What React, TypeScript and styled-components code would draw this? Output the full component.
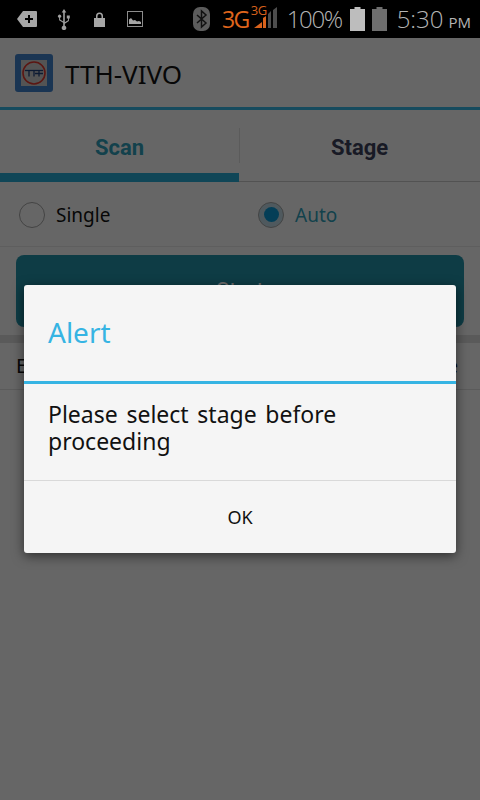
import React from 'react'
import styled, { createGlobalStyle } from 'styled-components'

const GlobalStyle = createGlobalStyle`
  html, body {
    margin: 0;
    padding: 0;
    height: 100%;
    background: #f4f4f4;
    font-family: "Noto Sans", Roboto, sans-serif;
  }
`

const Screen = styled.div`
  position: relative;
  width: 480px;
  height: 800px;
  overflow: hidden;
  display: flex;
  flex-direction: column;
  background: #f4f4f4;
`

const StatusBar = styled.div`
  position: relative;
  z-index: 3;
  height: 38px;
  flex: none;
  background: #000;
  display: flex;
  align-items: center;
  padding-left: 17px;
  color: #b4b4b4;
`

const StatusLeft = styled.div`
  display: flex;
  align-items: center;
`

const StatusRight = styled.div`
  margin-left: auto;
  padding-right: 9px;
  display: flex;
  align-items: center;
`

const NetLabel = styled.span`
  color: #e0661c;
  font: 400 23px/1 "Open Sans", sans-serif;
  letter-spacing: -1.5px;
  margin-left: 12px;
`

const SignalWrap = styled.div`
  position: relative;
  width: 28px;
  height: 26px;
  margin-left: 1px;
`

const SmallNet = styled.span`
  position: absolute;
  left: 1px;
  top: -2px;
  color: #d9621c;
  font: 400 13px/1 "Open Sans", sans-serif;
  letter-spacing: -0.4px;
`

const Percent = styled.span`
  font: 300 24px/1 "Open Sans", sans-serif;
  letter-spacing: -1.4px;
  margin-left: 9px;
`

const Clock = styled.span`
  font: 300 24px/1 "Open Sans", sans-serif;
  margin-left: 10px;
`

const Meridiem = styled.span`
  font: 400 15px/1 "Open Sans", sans-serif;
  margin-left: 5px;
  margin-top: 6px;
`

const Header = styled.header`
  height: 69px;
  flex: none;
  display: flex;
  align-items: center;
  padding-left: 15px;
  gap: 12px;
  border-bottom: 3px solid #36b4e0;
`

const AppIcon = styled.div`
  width: 38px;
  height: 38px;
  border-radius: 3px;
  background: #3f7fc6;
  display: flex;
  align-items: center;
  justify-content: center;
`

const AppTitle = styled.h1`
  margin: 2px 0 0;
  font: 400 26px/1 "Noto Sans", sans-serif;
  color: #111;
`

const Tabs = styled.nav`
  height: 72px;
  flex: none;
  display: flex;
  border-bottom: 1px solid #c4c4c4;
  box-sizing: border-box;
`

const Tab = styled.div<{ $active?: boolean }>`
  position: relative;
  display: flex;
  align-items: center;
  justify-content: center;
  width: ${p => (p.$active ? '239px' : '241px')};
  padding-top: 5px;
  box-sizing: border-box;
  font: 700 22px/1 Roboto, sans-serif;
  color: ${p => (p.$active ? '#2e9cb5' : '#3a3f58')};

  ${p =>
    p.$active
      ? `&::after {
          content: '';
          position: absolute;
          left: 0;
          right: 0;
          bottom: -1px;
          height: 9px;
          background: #28a7cf;
        }`
      : `&::before {
          content: '';
          position: absolute;
          left: 0;
          top: 18px;
          height: 35px;
          width: 1px;
          background: #d8d8d8;
        }`}
`

const RadioRow = styled.div`
  height: 65px;
  flex: none;
  display: grid;
  grid-template-columns: 239px 1fr;
  align-items: center;
  box-sizing: border-box;
  border-bottom: 1px solid #e0e0e0;
  padding: 1px 0 0 19px;
`

const RadioItem = styled.label<{ $on?: boolean }>`
  display: flex;
  align-items: center;
  gap: 11px;
  font: 400 19px/1 "Noto Sans", sans-serif;
  color: ${p => (p.$on ? '#2e9cb5' : '#111')};
`

const RadioText = styled.span`
  margin-top: 2px;
`

const RadioMark = styled.span<{ $on?: boolean }>`
  width: 26px;
  height: 26px;
  box-sizing: border-box;
  border-radius: 50%;
  border: 1.5px solid #a0a0a0;
  background: ${p => (p.$on ? '#bcd5df' : 'transparent')};
  display: flex;
  align-items: center;
  justify-content: center;

  &::after {
    content: '';
    width: 15px;
    height: 15px;
    border-radius: 50%;
    background: ${p => (p.$on ? '#0a95cf' : 'transparent')};
  }
`

const StartButton = styled.button`
  display: block;
  height: 72px;
  flex: none;
  margin: 8px 16px;
  border: 0;
  border-radius: 8px;
  background: #238fa5;
  color: #fff;
  font: 400 22px/1 Roboto, sans-serif;
`

const Band = styled.div`
  height: 8px;
  flex: none;
  background: #d6d6d6;
`

const ListHead = styled.div`
  height: 46px;
  flex: none;
  display: flex;
  align-items: center;
  justify-content: space-between;
  padding: 0 22px 0 16px;
  border-bottom: 1px solid #d8d8d8;
  font: 400 20px/1 "Noto Sans", sans-serif;
  color: #111;
`

const Backdrop = styled.div`
  position: absolute;
  inset: 0;
  z-index: 1;
  background: rgba(0, 0, 0, 0.58);
  display: flex;
  justify-content: center;
  padding-top: 285px;
  box-sizing: border-box;
`

const Dialog = styled.div`
  width: 432px;
  height: 268px;
  border-radius: 3px;
  background: #f5f5f5;
  box-shadow: 0 3px 12px rgba(0, 0, 0, 0.55);
  display: flex;
  flex-direction: column;
`

const DialogTitle = styled.div`
  height: 99px;
  flex: none;
  box-sizing: border-box;
  padding: 31px 0 0 24px;
  border-bottom: 3px solid #36b4e3;
  color: #36b4e3;
  font: 400 28px/1.2 "Noto Sans", sans-serif;
`

const DialogBody = styled.div`
  height: 97px;
  flex: none;
  box-sizing: border-box;
  padding: 17px 24px 0;
  border-bottom: 1px solid #d9d9d9;
  color: #111;
  font: 400 23px/27px "Noto Sans", sans-serif;
  word-spacing: 2.7px;
`

const DialogAction = styled.button`
  flex: 1;
  border: 0;
  background: none;
  color: #111;
  font: 400 18px/1 "Noto Sans", sans-serif;
`

const BatteryIcon = ({ fill, gap }: { fill: string; gap?: number }) => (
  <svg width="15" height="24" viewBox="0 0 15 24" style={{ marginLeft: gap }}>
    <path d="M4.5 0h6v2H15v22H0V2h4.5z" fill={fill} />
  </svg>
)

export default function App() {
  return (
    <Screen>
      <GlobalStyle />
      <StatusBar>
        <StatusLeft>
          <svg width="20" height="16" viewBox="0 0 20 16">
            <path d="M6 0h13a1 1 0 0 1 1 1v14a1 1 0 0 1-1 1H6L0 8z" fill="#a6a6a6" />
            <path d="M8 7h3V4h2v3h3v2h-3v3h-2V9H8z" fill="#000" />
          </svg>
          <svg width="14" height="21" viewBox="0 0 14 21" fill="#a0a0a0" style={{ marginLeft: 20 }}>
            <path d="M7 0l2.3 3.4H7.800v9.800l3.200-2V9.500H9.800V6.400h3v3.100h-.9v2.400L7.800 14.800v1.900a2.300 2.300 0 1 1-1.600 0v-2.900L2.100 11.200V8.800a1.600 1.600 0 1 1 1 0v1.800l3.100 1.900V3.400H4.700z" />
          </svg>
          <svg width="11" height="15" viewBox="0 0 11 15" fill="#a6a6a6" style={{ marginLeft: 23 }}>
            <path d="M2 6V4a3.500 3.500 0 0 1 7 0v2h2v9H0V6zm1.500 0h4V4a2 2 0 0 0-4 0z" />
          </svg>
          <svg width="16" height="16" viewBox="0 0 16 16" style={{ marginLeft: 22 }}>
            <rect x=".5" y=".5" width="15" height="15" fill="none" stroke="#8c8c8c" />
            <path d="M2 13V8.500l2-1.500 2 2.500L8 9l2 1.500 2-.5 2 1V13z" fill="#a6a6a6" />
          </svg>
        </StatusLeft>
        <StatusRight>
          <svg width="17" height="24" viewBox="0 0 17 24">
            <rect width="17" height="24" rx="7" fill="#5c5c5c" />
            <path d="M4 8l9 8-4.500 4V4l4.500 4-9 8" fill="none" stroke="#111" strokeWidth="1.500" />
          </svg>
          <NetLabel>3G</NetLabel>
          <SignalWrap>
            <SmallNet>3G</SmallNet>
            <svg width="28" height="26" viewBox="0 0 28 26">
              <path d="M4 22l8-6v6zM13 22V12l3-2v12z" fill="#d9621c" />
              <path d="M18 22V8l3-3v17zM23 22V4l4-3v21z" fill="#4d4d4d" />
            </svg>
          </SignalWrap>
          <Percent>100%</Percent>
          <BatteryIcon fill="#bdbdbd" gap={8} />
          <BatteryIcon fill="#6e6e6e" gap={7} />
          <Clock>5:30</Clock>
          <Meridiem>PM</Meridiem>
        </StatusRight>
      </StatusBar>
      <Header>
        <AppIcon>
          <svg width="26" height="26" viewBox="0 0 26 26">
            <rect width="26" height="26" fill="#c9c9c9" />
            <circle cx="13" cy="13" r="11" fill="none" stroke="#d9352c" strokeWidth="1.600" />
            <path d="M4 10.500h18" stroke="#1f3f77" strokeWidth="1.300" />
            <path d="M8 10.500v6M13 10.500v6M18 10.500v6M14 13.500h8" stroke="#1f3f77" strokeWidth="1.300" fill="none" />
          </svg>
        </AppIcon>
        <AppTitle>TTH-VIVO</AppTitle>
      </Header>
      <Tabs>
        <Tab $active>Scan</Tab>
        <Tab>Stage</Tab>
      </Tabs>
      <RadioRow>
        <RadioItem>
          <RadioMark />
          <RadioText>Single</RadioText>
        </RadioItem>
        <RadioItem $on>
          <RadioMark $on />
          <RadioText>Auto</RadioText>
        </RadioItem>
      </RadioRow>
      <StartButton>Start</StartButton>
      <Band />
      <ListHead>
        <span>EAN</span>
        <span>Stage</span>
      </ListHead>
      <Backdrop>
        <Dialog>
          <DialogTitle>Alert</DialogTitle>
          <DialogBody>Please select stage before proceeding</DialogBody>
          <DialogAction>OK</DialogAction>
        </Dialog>
      </Backdrop>
    </Screen>
  )
}
